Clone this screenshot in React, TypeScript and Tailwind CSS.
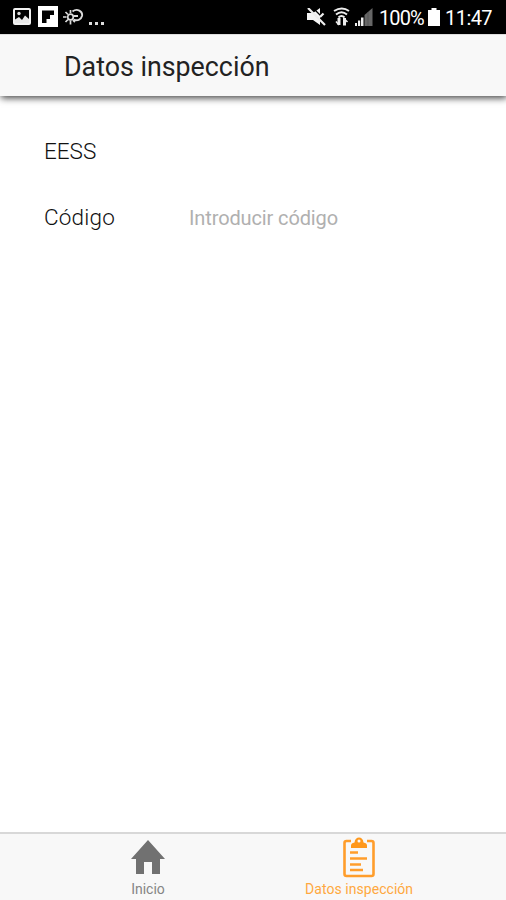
function StatusBar() {
  return (
    <div className="flex h-[34px] items-start bg-black text-white">
      <svg className="ml-[13px] mt-2" width="18" height="17" viewBox="0 0 18 17">
        <rect x="1" y="1" width="16" height="15" rx="1" fill="black" stroke="#f2f2f2" strokeWidth="2" />
        <path d="M2 11.5l4-2.5 3 3 3-4.5 4 3.500v4H2z" fill="#e8e8e8" />
        <circle cx="6" cy="5.500" r="1.700" fill="#dddddd" />
      </svg>
      <svg className="ml-[6px] mt-[6px]" width="22" height="21" viewBox="0 0 22 21">
        <rect x="1" y="0" width="20" height="21" fill="white" />
        <path d="M5 4.500h12v4.500h-4v4H9.500v4H5z" fill="black" />
      </svg>
      <svg className="ml-[4px] mt-2" width="22" height="18" viewBox="0 0 22 18" fill="none" stroke="#dcdcdc" strokeWidth="1.700">
        <circle cx="7.500" cy="9" r="2.800" />
        <path d="M7.500 2v3M7.500 12.500v4M0 9h3.500M2.500 4l2.500 2.500M2.500 14l2.500-2.500" />
        <path d="M9.500 3.500C14 0 20 3 19 8c-1 4-5 5-8 3.500M11 8h4M12 14l-2-2" strokeWidth="1.900" />
      </svg>
      <div className="ml-[4px] mt-[22px] flex gap-[3px]">
        <span className="h-[3px] w-[3px] bg-[#dddddd]" />
        <span className="h-[3px] w-[3px] bg-[#dddddd]" />
        <span className="h-[3px] w-[3px] bg-[#dddddd]" />
      </div>
      <svg className="ml-auto mt-2" width="20" height="18" viewBox="0 0 20 18">
        <path d="M0 5h6l7-5v17l-7-5H0z" fill="#f5f5f5" />
        <path d="M7 1l12 12" stroke="black" strokeWidth="1.200" />
        <path d="M1 0l17 17M13 9l3.500-3.500" stroke="#eeeeee" strokeWidth="2.200" />
      </svg>
      <svg className="ml-[6px] mt-[7px]" width="18" height="20" viewBox="0 0 18 20" fill="none" stroke="#ededed" strokeWidth="2">
        <path d="M1 4Q9-1 16 4M3 7.500Q8.500 3 14 7.500M5.500 10.500Q8.500 7.500 11.500 10.500" />
        <path d="M6 11v7M11.500 11v7.500" strokeWidth="3" />
        <path d="M3 14.500L6 18M11.500 12l3 3" strokeWidth="1.500" />
      </svg>
      <svg className="ml-[4px] mt-2" width="18" height="18" viewBox="0 0 18 18">
        <path d="M0 15h2v3H0zM3 12.500h2.200V18H3zM6 9.500h2.500V18H6z" fill="#eeeeee" />
        <path d="M9.500 7L17.500 0v18h-8z" fill="#666666" />
        <path d="M13 4v14" stroke="#505050" strokeWidth=".8" />
      </svg>
      <span className="ml-[6px] mt-[6px] w-[48px] whitespace-nowrap text-[20px] leading-6 tracking-[-0.9px]">100%</span>
      <svg className="ml-px mt-2" width="12" height="18" viewBox="0 0 12 18">
        <path d="M3.500 0h5v2H12v16H0V2h3.500z" fill="white" />
      </svg>
      <span className="ml-[5px] mr-[13px] mt-[6px] w-[48px] whitespace-nowrap text-[20px] leading-6 tracking-[-0.55px]">11:47</span>
    </div>
  );
}

export default function App() {
  return (
    <div className="flex h-[900px] w-full flex-col overflow-hidden bg-white font-[Roboto,sans-serif]">
      <StatusBar />
      <header className="h-[62px] shrink-0 border-t border-[#dedede] bg-[#f8f8f8] pl-16 shadow-[1px_2px_7px_0px_rgba(0,0,0,0.75)]">
        <h1 className="pt-4 text-[26.8px] leading-8 text-[#222222]">Datos inspección</h1>
      </header>
      <main className="flex grow flex-col pt-[39px] text-[22.5px] leading-8 text-[#111111]">
        <div className="flex h-[66px] pl-[44px]">
          <span className="font-light">EESS</span>
        </div>
        <label className="flex h-[66px] pl-[44px]">
          <span className="w-[145px] font-light tracking-[0.2px]">Código</span>
          <input
            className="mt-px h-8 w-[250px] bg-transparent text-[20px] leading-8 tracking-[-0.12px] outline-none placeholder:text-[#b0b0b0]"
            placeholder="Introducir código"
          />
        </label>
      </main>
      <nav className="grid h-[68px] shrink-0 grid-cols-[296px_1fr] border-t-2 border-[#d8d8d8] bg-[#f8f8f8] text-[14px] leading-4">
        <div className="flex flex-col items-center pt-[6px] text-[#858585]">
          <svg width="34" height="35" viewBox="0 0 34 35">
            <path d="M17 0L34 19h-5v15h-8V22h-8v12H5V19H0z" fill="#717171" />
          </svg>
          <span className="mt-[6px]">Inicio</span>
        </div>
        <div className="flex flex-col items-start pt-[3px] text-[#ffa840]">
          <svg className="ml-[47px]" width="32" height="41" viewBox="0 0 32 41" fill="none" stroke="#ff9d2b">
            <path d="M8 4H3.500Q1.500 4 1.500 6v31q0 2 2 2h25q2 0 2-2V6q0-2-2-2H24" strokeWidth="2.600" />
            <path d="M8 11V8.500Q8 6 11.500 5.500C12-1.200 20-1.200 20.500 5.500Q24 6 24 8.500V11z" fill="#ff981c" stroke="none" />
            <circle cx="16" cy="4" r="1.500" fill="#f8f8f8" stroke="none" />
            <path d="M7 15.500h8M7 21.500h17M7 27.500h11M7 33h13" strokeWidth="2.500" />
          </svg>
          <span className="ml-[9px] mt-[3px] whitespace-nowrap tracking-[0.05px]">Datos inspección</span>
        </div>
      </nav>
    </div>
  );
}
